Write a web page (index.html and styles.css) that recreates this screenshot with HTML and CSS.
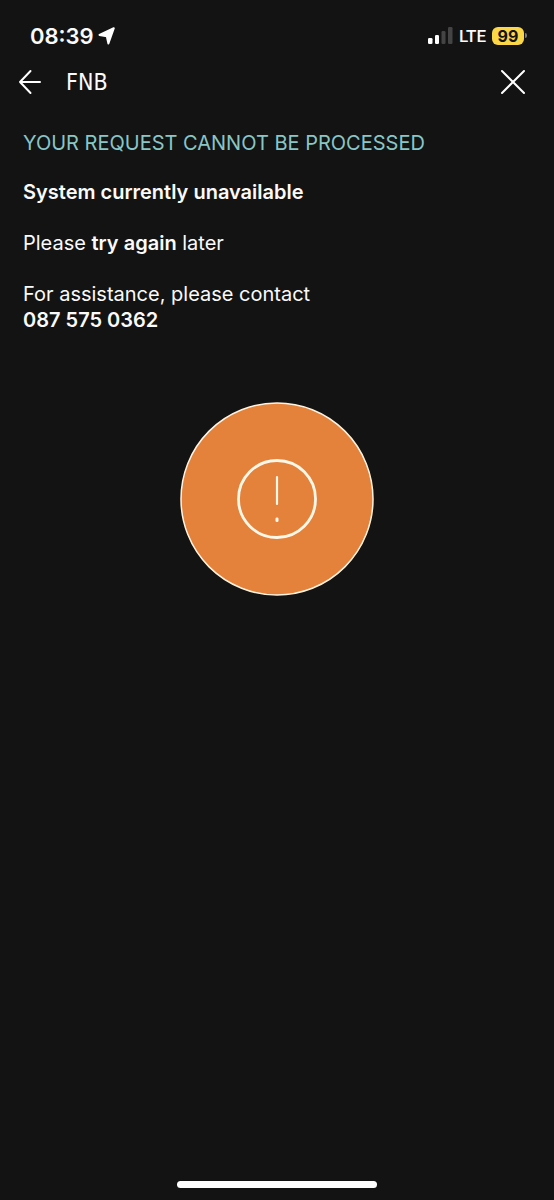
FILE: index.html
```html
<!DOCTYPE html>
<html lang="en">
<head>
<meta charset="utf-8">
<meta name="viewport" content="width=device-width, initial-scale=1">
<title>FNB</title>
<link rel="stylesheet" href="styles.css">
</head>
<body>
<div class="screen">
  <div class="status-bar">
    <div class="clock">
      <span>08:39</span>
      <svg class="location" viewBox="0 0 18 18" aria-hidden="true"><path d="M1.500 8 15.800 1.200 10.400 16.500 8.800 9.300Z"/></svg>
    </div>
    <div class="indicators">
      <svg class="signal" viewBox="0 0 25 17" aria-hidden="true">
        <rect x="0" y="11" width="4.500" height="6" rx="1.3"/>
        <rect x="7" y="8" width="4" height="9" rx="1.3"/>
        <rect class="weak" x="13.500" y="4" width="4" height="13" rx="1.3"/>
        <rect class="weak" x="20" y="0" width="4.500" height="17" rx="1.3"/>
      </svg>
      <span class="network">LTE</span>
      <div class="battery"><span class="level">99</span><span class="cap"></span></div>
    </div>
  </div>
  <header class="title-bar">
    <button class="icon-button" type="button" aria-label="Back">
      <svg class="icon" viewBox="0 0 26 26"><path d="M23 13H3M13.500 2 3 13l10.500 11"/></svg>
    </button>
    <h1 class="title">FNB</h1>
    <button class="icon-button" type="button" aria-label="Close">
      <svg class="icon" viewBox="0 0 26 26"><path d="m2 2 22 22M24 2 2 24"/></svg>
    </button>
  </header>
  <main class="content">
    <h2 class="heading">YOUR REQUEST CANNOT BE PROCESSED</h2>
    <p><strong>System currently unavailable</strong></p>
    <p>Please <strong>try again</strong> later</p>
    <p>For assistance, please contact<br><strong>087 575 0362</strong></p>
    <svg class="alert" viewBox="0 0 194 194" role="img" aria-label="Warning">
      <circle class="disc" cx="97" cy="97" r="96"/>
      <circle class="ring" cx="97" cy="97" r="38.500"/>
      <path class="mark" d="M97 75v27"/>
      <rect class="dot" x="95.500" y="115.500" width="3" height="4.500" rx="1.300"/>
    </svg>
  </main>
  <div class="home-indicator"></div>
</div>
</body>
</html>
```
FILE: styles.css
```css
* { box-sizing: border-box; }
body {
  margin: 0;
  background: #131313;
  color: #fafafa;
  font-family: Inter, "Liberation Sans", sans-serif;
  font-size: 20px;
  line-height: 26px;
}
.screen {
  min-height: 100vh;
  display: flex;
  flex-direction: column;
}
.status-bar {
  display: flex;
  justify-content: space-between;
  align-items: center;
  padding: 21px 27px 0 30px;
  height: 50px;
}
.clock {
  display: flex;
  align-items: center;
  gap: 4px;
  font-size: 22px;
  font-weight: 600;
}
.location {
  width: 18px;
  height: 18px;
  fill: #fff;
  stroke: #fff;
  stroke-width: 2;
  stroke-linejoin: round;
}
.indicators { display: flex; align-items: center; gap: 6px; }
.signal { width: 25px; height: 17px; fill: #fff; }
.signal .weak { fill: #444; }
.network { font-family: Roboto, sans-serif; font-size: 17px; font-weight: 500; }
.battery { display: flex; align-items: center; gap: 1px; }
.level {
  width: 32px;
  border-radius: 6px;
  background: #fbd748;
  color: #131313;
  font-size: 16px;
  font-weight: 700;
  line-height: 18px;
  text-align: center;
}
.cap { width: 2px; height: 5px; border-radius: 0 2px 2px 0; background: #777; }
.title-bar {
  display: flex;
  align-items: center;
  padding: 0 28px 0 17px;
  height: 64px;
}
.icon-button { display: flex; padding: 0; border: 0; background: none; }
.icon {
  width: 26px;
  height: 26px;
  fill: none;
  stroke: #fff;
  stroke-width: 2;
  stroke-linecap: round;
  stroke-linejoin: round;
}
.title {
  flex: 1;
  margin: 0;
  padding-left: 23px;
  font: 400 23px/26px "DejaVu Sans Condensed", Roboto, sans-serif;
}
.content {
  flex: 1;
  display: flex;
  flex-direction: column;
  padding: 16px 23px;
}
.heading {
  margin: 0 0 23px;
  color: #88c6c7;
  font-size: 20px;
  font-weight: 400;
}
p { margin: 0 0 25px; }
strong { font-weight: 600; }
.alert { align-self: center; width: 194px; height: 194px; margin-top: 44px; }
.disc { fill: #e4813a; stroke: #fff4e2; stroke-width: 1.5; }
.ring { fill: none; stroke: #fff8e8; stroke-width: 2.8; }
.mark { stroke: #fff8e8; stroke-width: 2.2; stroke-linecap: round; }
.dot { fill: #fff8e8; }
.home-indicator {
  align-self: center;
  width: 36%;
  height: 7px;
  margin-bottom: 12px;
  border-radius: 4px;
  background: #fff;
}
```
